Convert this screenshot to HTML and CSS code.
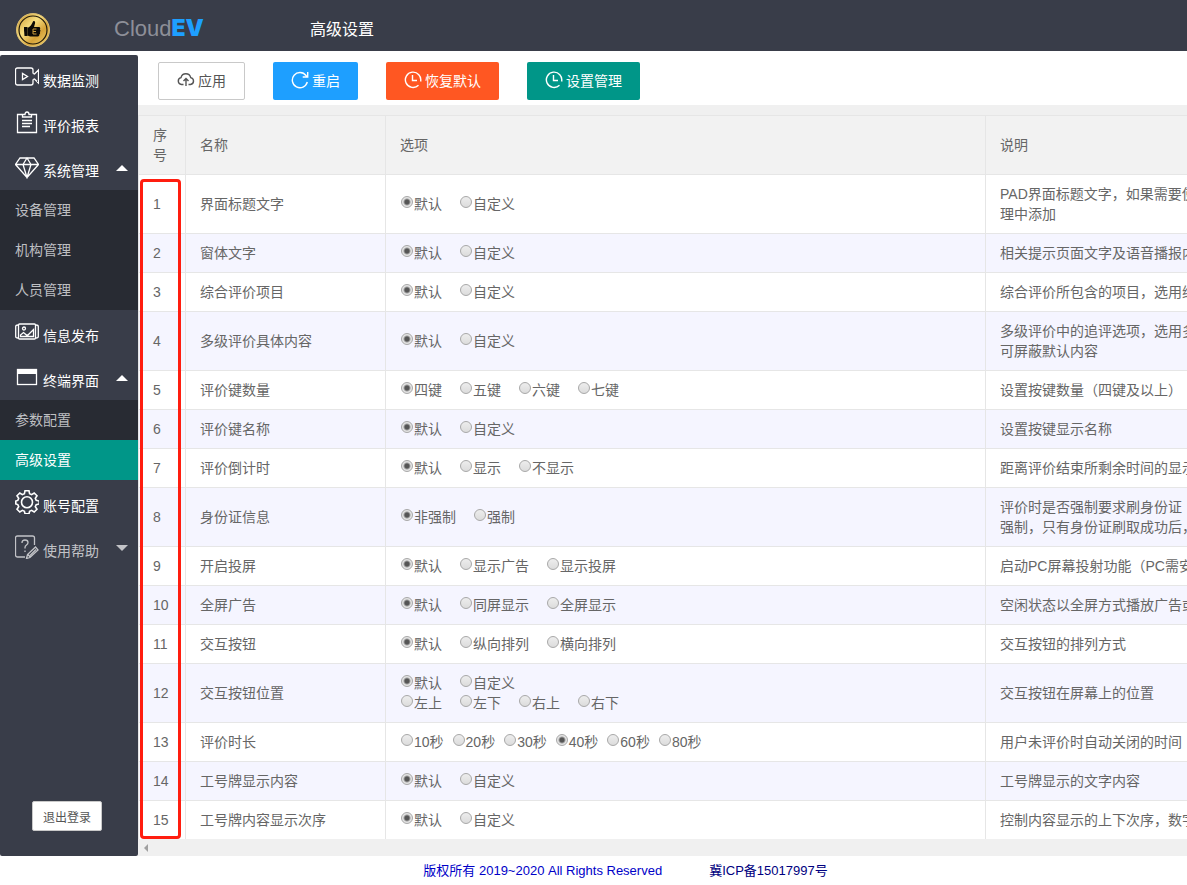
FILE: index.html
```html
<!DOCTYPE html>
<html lang="zh-CN">
  <head>
    <meta charset="UTF-8" />
    <meta name="viewport" content="width=device-width, initial-scale=1.0" />
    <title>高级设置</title>
    <link rel="stylesheet" href="styles.css">
  </head>
  <body>
    <header class="header">
      <svg class="logo" width="34" height="34" viewBox="0 0 34 34">
        <defs>
          <linearGradient id="gold" x1="0" y1="0" x2="1" y2="1">
            <stop offset="0" stop-color="#c8922a" />
            <stop offset="0.4" stop-color="#f7df80" />
            <stop offset="0.65" stop-color="#d6a238" />
            <stop offset="1" stop-color="#f3d877" />
          </linearGradient>
        </defs>
        <circle cx="17" cy="17" r="16.5" fill="url(#gold)" stroke="#d9bd72" />
        <circle cx="17" cy="17" r="14" fill="none" stroke="#221a0a" stroke-width="1.2" />
        <path d="M8 14h3.5v9h-3L8 17z" fill="#0c0a06" />
        <path
          d="M11.5 15c3-1.500 4.500-4 5.500-6.500 1.500-1 2.500 0 2 2l-1 3.500h5c1.500 0 1.500 2 .8 2.500 1 .6.800 2 0 2.500.6.800.4 2-.5 2.300.3 1-.3 2.200-1.600 2.200h-7.500l-2.700-1z"
          fill="#0c0a06"
        />
        <path d="M20.500 16h-3.500v5h3.500M17 18.500h3" fill="none" stroke="#c79a3c" stroke-width="1" />
      </svg>
      <div class="brand">Cloud<b>EV</b></div>
      <h1 class="title">高级设置</h1>
    </header>
    <div class="wrap">
      <nav class="side">
        <ul class="menu">
          <li>
            <a class="item" href="#">
              <svg class="icon" viewBox="0 0 24 24">
                <path d="M18 8.500V5q0-2-2-2H2.500q-2 0-2 2v13q0 2 2 2H16q2 0 2-2v-3.500M18 8.500l1.500.5 4-4v13l-4-4-1.500.5" />
                <path d="M7.500 8.500v6l5-3z" />
              </svg>
              <span>数据监测</span>
            </a>
          </li>
          <li>
            <a class="item" href="#">
              <svg class="icon" viewBox="0 0 24 24">
                <path d="M7 4.500H2.500v18h19v-18H17" />
                <path d="M7.500 7V4.500H10q0-2.500 2-2.500t2 2.500h2.500V7z" />
                <path d="M7 10.500h10M7 13.500h10M7 16.500h8" />
              </svg>
              <span>评价报表</span>
            </a>
          </li>
          <li>
            <a class="item" href="#">
              <svg class="icon" viewBox="0 0 24 24">
                <path d="M5 3h14l4.500 6.500L12 22.500.5 9.500zM.5 9.500h23M8 9.500l4 13 4-13M8 9.500L12 3l4 6.500" />
              </svg>
              <span>系统管理</span>
              <i class="caret up"></i>
            </a>
            <ul class="sub">
              <li><a href="#">设备管理</a></li>
              <li><a href="#">机构管理</a></li>
              <li><a href="#">人员管理</a></li>
            </ul>
          </li>
          <li>
            <a class="item" href="#">
              <svg class="icon" viewBox="0 0 24 24">
                <rect x="3.500" y="4" width="17" height="15" rx="1" />
                <path d="M3 5Q.7 5 .7 6.500v10q0 1.500 2.300 1.500M21 5q2.300 0 2.300 1.500v10q0 1.500-2.300 1.500" />
                <circle cx="9" cy="8.500" r="1.500" />
                <path d="M5.500 16.500v-1.500l3-2.500 3 2.500h1.500l5.500-5.500v7z" />
              </svg>
              <span>信息发布</span>
            </a>
          </li>
          <li>
            <a class="item" href="#">
              <svg class="icon" viewBox="0 0 24 24">
                <rect x="2.500" y="4.500" width="19" height="15" />
                <path class="solid" d="M2 4h20v5H2z" />
              </svg>
              <span>终端界面</span>
              <i class="caret up"></i>
            </a>
            <ul class="sub">
              <li><a href="#">参数配置</a></li>
              <li><a class="active" href="#">高级设置</a></li>
            </ul>
          </li>
          <li>
            <a class="item" href="#">
              <svg class="icon gear" viewBox="0 0 24 24">
                <path d="M10 .8h4l.6 3 2 .9 2.600-1.700 2.800 2.800-1.700 2.600.9 2 3 .6v3l-3 .6-.9 2 1.700 2.600-2.800 2.800-2.600-1.700-2 .9-.6 2.500h-4l-.6-2.500-2-.9-2.600 1.700L2 19.200l1.700-2.600-.9-2-2-.6v-3l2-.6.9-2L2 5.800 4.800 3l2.600 1.700 2-.9z" />
                <circle cx="12" cy="12.300" r="5.500" />
              </svg>
              <span>账号配置</span>
            </a>
          </li>
          <li>
            <a class="item dim" href="#">
              <svg class="icon" viewBox="0 0 24 24">
                <path d="M19.500 10V3q0-2-2-2h-15q-2 0-2 2v17q0 2 2 2H10" />
                <path d="M7 8q0-3 3-3t3 2.500q0 1.500-1.500 2.500T10 12.500v1M10 15.500v1.500" />
                <path d="M11.500 23.500l1-4 8-7.500 2.500 3-8 7.500zM13 19.500l2.500 3M15 20.500l6-6" />
              </svg>
              <span>使用帮助</span>
              <i class="caret down"></i>
            </a>
          </li>
        </ul>
        <button class="logout" type="button">退出登录</button>
      </nav>
      <main class="main">
        <div class="toolbar">
          <button class="btn plain" type="button">
            <svg viewBox="0 0 18 18">
              <path d="M6.500 13.500h-2A3.500 3.500 0 0 1 4 6.600a5 5 0 0 1 9.700 0 3.500 3.500 0 0 1-.2 6.900h-2M9 15V7.500M6.500 10L9 7.500l2.500 2.500" />
            </svg>应用
          </button>
          <button class="btn blue" type="button">
            <svg viewBox="0 0 18 18">
              <path d="M16.300 11A7.600 7.600 0 1 1 15 4.500l1.500 1.300M16.700 1v5h-5" />
            </svg>重启
          </button>
          <button class="btn orange" type="button">
            <svg viewBox="0 0 18 18">
              <path d="M14.500 14.300A7.700 7.700 0 1 1 16.600 10.500M8.500 4v5.500H13" />
            </svg>恢复默认
          </button>
          <button class="btn green" type="button">
            <svg viewBox="0 0 18 18">
              <path d="M14.500 14.300A7.700 7.700 0 1 1 16.600 10.500M8.500 4v5.500H13" />
            </svg>设置管理
          </button>
        </div>
        <div class="table-box">
          <table class="table">
            <colgroup>
              <col class="col-no" />
              <col class="col-name" />
              <col class="col-option" />
              <col class="col-desc" />
            </colgroup>
            <thead>
              <tr>
                <th>序号</th>
                <th>名称</th>
                <th>选项</th>
                <th>说明</th>
              </tr>
            </thead>
            <tbody>
              <tr>
                <td>1</td>
                <td>界面标题文字</td>
                <td>
                  <div class="options">
                    <label><input type="radio" name="r1" checked />默认</label>
                    <label><input type="radio" name="r1" />自定义</label>
                  </div>
                </td>
                <td>PAD界面标题文字，如果需要使<br />理中添加</td>
              </tr>
              <tr>
                <td>2</td>
                <td>窗体文字</td>
                <td>
                  <div class="options">
                    <label><input type="radio" name="r2" checked />默认</label>
                    <label><input type="radio" name="r2" />自定义</label>
                  </div>
                </td>
                <td>相关提示页面文字及语音播报内</td>
              </tr>
              <tr>
                <td>3</td>
                <td>综合评价项目</td>
                <td>
                  <div class="options">
                    <label><input type="radio" name="r3" checked />默认</label>
                    <label><input type="radio" name="r3" />自定义</label>
                  </div>
                </td>
                <td>综合评价所包含的项目，选用综</td>
              </tr>
              <tr>
                <td>4</td>
                <td>多级评价具体内容</td>
                <td>
                  <div class="options">
                    <label><input type="radio" name="r4" checked />默认</label>
                    <label><input type="radio" name="r4" />自定义</label>
                  </div>
                </td>
                <td>多级评价中的追评选项，选用多<br />可屏蔽默认内容</td>
              </tr>
              <tr>
                <td>5</td>
                <td>评价键数量</td>
                <td>
                  <div class="options">
                    <label><input type="radio" name="r5" checked />四键</label>
                    <label><input type="radio" name="r5" />五键</label>
                    <label><input type="radio" name="r5" />六键</label>
                    <label><input type="radio" name="r5" />七键</label>
                  </div>
                </td>
                <td>设置按键数量（四键及以上）</td>
              </tr>
              <tr>
                <td>6</td>
                <td>评价键名称</td>
                <td>
                  <div class="options">
                    <label><input type="radio" name="r6" checked />默认</label>
                    <label><input type="radio" name="r6" />自定义</label>
                  </div>
                </td>
                <td>设置按键显示名称</td>
              </tr>
              <tr>
                <td>7</td>
                <td>评价倒计时</td>
                <td>
                  <div class="options">
                    <label><input type="radio" name="r7" checked />默认</label>
                    <label><input type="radio" name="r7" />显示</label>
                    <label><input type="radio" name="r7" />不显示</label>
                  </div>
                </td>
                <td>距离评价结束所剩余时间的显示</td>
              </tr>
              <tr>
                <td>8</td>
                <td>身份证信息</td>
                <td>
                  <div class="options">
                    <label><input type="radio" name="r8" checked />非强制</label>
                    <label><input type="radio" name="r8" />强制</label>
                  </div>
                </td>
                <td>评价时是否强制要求刷身份证<br />强制，只有身份证刷取成功后，</td>
              </tr>
              <tr>
                <td>9</td>
                <td>开启投屏</td>
                <td>
                  <div class="options">
                    <label><input type="radio" name="r9" checked />默认</label>
                    <label><input type="radio" name="r9" />显示广告</label>
                    <label><input type="radio" name="r9" />显示投屏</label>
                  </div>
                </td>
                <td>启动PC屏幕投射功能（PC需安</td>
              </tr>
              <tr>
                <td>10</td>
                <td>全屏广告</td>
                <td>
                  <div class="options">
                    <label><input type="radio" name="r10" checked />默认</label>
                    <label><input type="radio" name="r10" />同屏显示</label>
                    <label><input type="radio" name="r10" />全屏显示</label>
                  </div>
                </td>
                <td>空闲状态以全屏方式播放广告或</td>
              </tr>
              <tr>
                <td>11</td>
                <td>交互按钮</td>
                <td>
                  <div class="options">
                    <label><input type="radio" name="r11" checked />默认</label>
                    <label><input type="radio" name="r11" />纵向排列</label>
                    <label><input type="radio" name="r11" />横向排列</label>
                  </div>
                </td>
                <td>交互按钮的排列方式</td>
              </tr>
              <tr>
                <td>12</td>
                <td>交互按钮位置</td>
                <td>
                  <div class="options">
                    <label><input type="radio" name="r12" checked />默认</label>
                    <label><input type="radio" name="r12" />自定义</label>
                  </div>
                  <div class="options">
                    <label><input type="radio" name="r12" />左上</label>
                    <label><input type="radio" name="r12" />左下</label>
                    <label><input type="radio" name="r12" />右上</label>
                    <label><input type="radio" name="r12" />右下</label>
                  </div>
                </td>
                <td>交互按钮在屏幕上的位置</td>
              </tr>
              <tr>
                <td>13</td>
                <td>评价时长</td>
                <td>
                  <div class="options tight">
                    <label><input type="radio" name="r13" />10秒</label>
                    <label><input type="radio" name="r13" />20秒</label>
                    <label><input type="radio" name="r13" />30秒</label>
                    <label><input type="radio" name="r13" checked />40秒</label>
                    <label><input type="radio" name="r13" />60秒</label>
                    <label><input type="radio" name="r13" />80秒</label>
                  </div>
                </td>
                <td>用户未评价时自动关闭的时间</td>
              </tr>
              <tr>
                <td>14</td>
                <td>工号牌显示内容</td>
                <td>
                  <div class="options">
                    <label><input type="radio" name="r14" checked />默认</label>
                    <label><input type="radio" name="r14" />自定义</label>
                  </div>
                </td>
                <td>工号牌显示的文字内容</td>
              </tr>
              <tr>
                <td>15</td>
                <td>工号牌内容显示次序</td>
                <td>
                  <div class="options">
                    <label><input type="radio" name="r15" checked />默认</label>
                    <label><input type="radio" name="r15" />自定义</label>
                  </div>
                </td>
                <td>控制内容显示的上下次序，数字</td>
              </tr>
            </tbody>
          </table>
          <div class="mark"></div>
        </div>
        <div class="scrollbar"><i class="arrow"></i></div>
      </main>
    </div>
    <footer class="footer">
      <a href="#">版权所有 2019~2020 All Rights Reserved</a>
      <a class="icp" href="#">冀ICP备15017997号</a>
    </footer>
  </body>
</html>
```
FILE: styles.css
```css
* {
  box-sizing: border-box;
}
body {
  margin: 0;
  min-height: 100vh;
  display: flex;
  flex-direction: column;
  font: 14px/20px "Liberation Sans", "Noto Sans CJK SC", sans-serif;
  color: #666;
  background: #fff;
}
ul {
  margin: 0;
  padding: 0;
  list-style: none;
}
a {
  text-decoration: none;
}
button {
  font-family: inherit;
  cursor: pointer;
}

.header {
  display: flex;
  align-items: center;
  height: 51px;
  padding: 9px 16px 0;
  background: #393d49;
}
.logo {
  margin-right: 64px;
}
.brand {
  width: 196px;
  padding-bottom: 4px;
  font-size: 22px;
  line-height: 24px;
  color: #8d8f98;
}
.brand b {
  font-family: Inter, "Liberation Sans", sans-serif;
  font-size: 23px;
  font-weight: 900;
  color: #1e9fff;
}
.title {
  margin: 0;
  font-size: 16px;
  font-weight: 400;
  color: #fff;
}

.wrap {
  display: flex;
  flex: 1;
}
.side {
  display: flex;
  flex-direction: column;
  flex: none;
  width: 138px;
  margin-top: 4px;
  border-radius: 2px;
  background: #393d49;
}
.item {
  display: flex;
  align-items: center;
  gap: 4px;
  height: 45px;
  padding: 0 10px 0 15px;
  color: #fff;
}
.item span {
  padding-top: 6px;
}
.dim {
  color: #c2c3c7;
}
.icon {
  width: 24px;
  height: 24px;
  margin-bottom: 2px;
  fill: none;
  stroke: currentColor;
  stroke-width: 1.3;
}
.gear {
  stroke-width: 1.6;
}
.icon .solid {
  fill: currentColor;
  stroke: none;
}
.caret {
  margin-left: auto;
  border: 6px solid transparent;
}
.up {
  border-top: 0;
  border-bottom-color: #fff;
}
.down {
  border-bottom: 0;
  border-top-color: #c2c3c7;
}
.sub {
  background: #282b33;
}
.sub a {
  display: block;
  padding: 0 15px;
  line-height: 40px;
  color: #bebfc2;
}
.sub .active {
  color: #fff;
  background: #009688;
}
.logout {
  width: 70px;
  height: 30px;
  margin: auto 0 25px 32px;
  padding: 0;
  border: 1px solid #c9c9c9;
  border-radius: 2px;
  font-size: 12px;
  color: #555;
  background: #fff;
}

.main {
  flex: 1;
  min-width: 0;
  background: #f0f0f0;
}
.toolbar {
  display: flex;
  align-items: center;
  gap: 28px;
  height: 54px;
  padding: 6px 20px 0;
  background: #fff;
}
.btn {
  display: flex;
  align-items: center;
  gap: 3px;
  height: 38px;
  padding: 0 18px 2px;
  border: 0;
  border-radius: 2px;
  font-size: 14px;
  color: #fff;
}
.btn svg {
  width: 18px;
  height: 18px;
  fill: none;
  stroke: currentColor;
  stroke-width: 1.4;
}
.plain {
  border: 1px solid #c9c9c9;
  color: #555;
  background: #fff;
}
.blue {
  background: #1e9fff;
}
.orange {
  background: #ff5722;
}
.green {
  background: #009688;
}

.table-box {
  position: relative;
  overflow: hidden;
  margin-top: 10px;
}
.table {
  width: 1247px;
  table-layout: fixed;
  border-collapse: separate;
  border-spacing: 0;
  background: #fff;
}
.col-no {
  width: 47px;
}
.col-name {
  width: 200px;
}
.col-option {
  width: 600px;
}
.col-desc {
  width: 400px;
}
.table th,
.table td {
  padding: 9px 14px;
  border: solid #e6e6e6;
  border-width: 1px 0 0 1px;
  font-weight: 400;
  text-align: left;
}
.table th {
  background: #f2f2f2;
}
.table tbody tr:nth-child(even) {
  background: #f5f5ff;
}
.options {
  display: flex;
  gap: 18px;
  padding-left: 1px;
}
.tight {
  gap: 9px;
}
.options label {
  display: flex;
  align-items: flex-start;
}
.options input {
  appearance: none;
  width: 12px;
  height: 12px;
  margin: 2px 1px 0 0;
  border: 1px solid #a8a8a8;
  border-radius: 50%;
  background: linear-gradient(#ededed, #dcdcdc);
}
.options input:checked {
  background: radial-gradient(circle, #555 0 2px, #e4e4e4 4px);
}
/* red frame round the number column */
.mark {
  position: absolute;
  top: 64px;
  bottom: 0;
  left: 2px;
  width: 41px;
  border: 3px solid #ff1d0f;
  border-radius: 4px;
  pointer-events: none;
}
.scrollbar {
  display: flex;
  align-items: center;
  height: 17px;
  padding-left: 6px;
}
.arrow {
  border: 4px solid transparent;
  border-left: 0;
  border-right-color: #a0a0a0;
}

.footer {
  display: flex;
  justify-content: center;
  gap: 47px;
  padding: 5px 0 4px 64px;
  font-size: 13px;
}
.footer a {
  color: #0000c8;
}
.footer .icp {
  color: #000080;
}
```
